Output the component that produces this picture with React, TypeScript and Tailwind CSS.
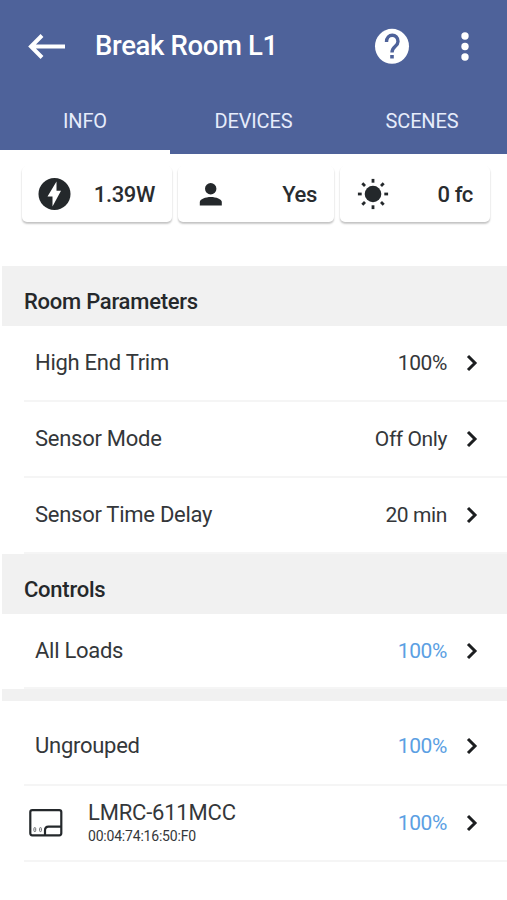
import type { ReactNode } from "react";

function Chevron() {
  return (
    <svg className="ml-[19px] mr-[29px] h-[18px] w-[12px] shrink-0" viewBox="0 0 12 18" fill="none" stroke="#1c1e20" strokeWidth="3">
      <path d="M2 2 L9 9 L2 16" />
    </svg>
  );
}

function Row({ value, blue, height, children }: { value: string; blue?: boolean; height: string; children: ReactNode }) {
  return (
    <div className={`ml-6 flex items-center border-b-2 border-[#f5f5f5] ${height}`}>
      {children}
      <span className={`ml-auto text-[21px] leading-7 tracking-[-0.4px] ${blue ? "text-[#5b9fe3]" : "text-[#34373a]"}`}>{value}</span>
      <Chevron />
    </div>
  );
}

function Label({ children }: { children: ReactNode }) {
  return <span className="ml-[11px] text-[22px] leading-7 tracking-[-0.27px]">{children}</span>;
}

function Section({ children, height }: { children: ReactNode; height: string }) {
  return (
    <h2 className={`ml-0.5 flex items-center bg-[#f1f1f1] pl-[22px] pt-[11px] text-[22px] font-medium leading-7 tracking-[-0.25px] text-[#25282b] ${height}`}>
      {children}
    </h2>
  );
}

function Card({ icon, children, width }: { icon: ReactNode; children: ReactNode; width: string }) {
  return (
    <div className={`flex h-[56px] items-center justify-between rounded-[5px] bg-white pl-[14px] pr-[17px] text-[22px] font-medium tracking-[-0.35px] text-[#292c2f] shadow-[0_2px_2px_rgba(0,0,0,0.2),0_1px_2px_rgba(0,0,0,0.06)] ${width}`}>
      {icon}
      <span>{children}</span>
    </div>
  );
}

const rays = [0, 45, 90, 135, 180, 225, 270, 315];

export default function App() {
  return (
    <div className="h-[900px] w-[507px] overflow-hidden bg-white font-['Roboto',sans-serif] text-[#34373a]">
      <header className="flex h-[154px] flex-col bg-[#4e629a] text-white">
        <div className="flex h-[92px] items-center pl-[28px]">
          <svg className="h-[26px] w-[38px]" viewBox="0 0 38 26" fill="none" stroke="white" strokeWidth="4">
            <path d="M37 13.5 H4 M14 2.5 L3 13.5 L14 24.5" />
          </svg>
          <h1 className="ml-[29px] text-[27.5px] font-medium leading-8 tracking-[-0.35px]">Break Room L1</h1>
          <svg className="ml-auto h-[36px] w-[36px]" viewBox="0 0 36 36">
            <ellipse cx="18" cy="18.3" rx="17" ry="17.5" fill="white" />
            <path d="M12.5 14 C12.5 5 24 5 24 13.5 C24 18.5 18 18 18 24.5" fill="none" stroke="#4e629a" strokeWidth="3.4" />
            <rect x="16.2" y="27" width="3.6" height="3.5" fill="#4e629a" />
          </svg>
          <svg className="ml-[50px] mr-[37px] h-[30px] w-[10px]" viewBox="0 0 10 30" fill="white">
            <circle cx="5" cy="5" r="3.7" />
            <circle cx="5" cy="15.5" r="3.7" />
            <circle cx="5" cy="26" r="3.7" />
          </svg>
        </div>
        <nav className="grid h-[62px] grid-cols-[170px_167px_170px] text-center text-[20px] leading-[58px] tracking-[-0.15px] text-[#e6ecfb]">
          <div className="border-b-4 border-white">INFO</div>
          <div>DEVICES</div>
          <div>SCENES</div>
        </nav>
      </header>

      <div className="flex h-[112px] gap-[6px] pl-[22px] pt-[12px]">
        <Card
          width="w-[150px]"
          icon={
            <svg className="ml-0.5 h-[34px] w-[34px]" viewBox="0 0 34 34">
              <circle cx="16.5" cy="17" r="16" fill="#24282b" />
              <path d="M18.5 4.5 L9.5 19.5 H14.5 V29.5 L23 13.8 H18.5 Z" fill="white" />
            </svg>
          }
        >
          1.39W
        </Card>
        <Card
          width="w-[156px]"
          icon={
            <svg className="ml-[7px] h-[24px] w-[24px]" viewBox="0 0 24 24" fill="#24282b">
              <circle cx="11.7" cy="6.8" r="5.7" />
              <path d="M.8 23.6 V20 C.8 17 6.5 14.9 11.8 14.9 S22.8 17 22.8 20 V23.6 Z" />
            </svg>
          }
        >
          Yes
        </Card>
        <Card
          width="w-[150px]"
          icon={
            <svg className="ml-[3px] h-[32px] w-[32px]" viewBox="0 0 32 32" fill="#24282b" stroke="#24282b">
              <circle cx="16" cy="16" r="8.3" stroke="none" />
              {rays.map((angle) => (
                <path key={angle} d="M16 .9 V4.7" strokeWidth="2.8" transform={`rotate(${angle} 16 16)`} />
              ))}
            </svg>
          }
        >
          0 fc
        </Card>
      </div>

      <Section height="h-[60px]">Room Parameters</Section>
      <Row height="h-[76px]" value="100%"><Label>High End Trim</Label></Row>
      <Row height="h-[76px]" value="Off Only"><Label>Sensor Mode</Label></Row>
      <Row height="h-[76px]" value="20 min"><Label>Sensor Time Delay</Label></Row>
      <Section height="h-[60px]">Controls</Section>
      <Row height="h-[75px]" value="100%" blue><Label>All Loads</Label></Row>
      <div className="ml-0.5 h-[12px] bg-[#f1f1f1]" />
      <div className="pt-[7px]">
        <Row height="h-[78px]" value="100%" blue><Label>Ungrouped</Label></Row>
      </div>
      <Row height="h-[76px]" value="100%" blue>
        <svg className="ml-[5px] h-[28px] w-[34px]" viewBox="0 0 34 28" fill="none" stroke="#24282b" strokeWidth="2.2">
          <rect x="1.3" y="1.1" width="31" height="25.2" rx="2" />
          <path d="M16 26 V21.5 Q16 17.6 19.5 17.6 H32" />
          <rect x="4.9" y="18.6" width="1.8" height="4" rx=".9" strokeWidth="1" stroke="#6a6d70" />
          <rect x="10.6" y="18.6" width="1.8" height="4" rx=".9" strokeWidth="1" stroke="#6a6d70" />
        </svg>
        <div className="ml-[25px] flex flex-col">
          <span className="text-[22px] leading-[26px] tracking-[-0.2px]">LMRC-611MCC</span>
          <span className="text-[14px] leading-[21px] tracking-[-0.2px]">00:04:74:16:50:F0</span>
        </div>
      </Row>
    </div>
  );
}
